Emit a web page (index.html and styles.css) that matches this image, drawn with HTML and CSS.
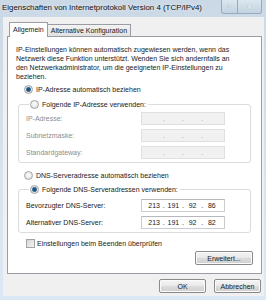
FILE: index.html
```html
<!DOCTYPE html>
<html lang="de">
<head>
  <meta charset="UTF-8" />
  <title>Eigenschaften von Internetprotokoll Version 4 (TCP/IPv4)</title>
  <link rel="stylesheet" href="styles.css">
</head>
<body>
  <div class="window">
    <!-- Titelleiste -->
    <div class="titlebar">
      <span class="title">Eigenschaften von Internetprotokoll Version 4 (TCP/IPv4)</span>
      <div class="caption">
        <span class="cap-btn help">?</span>
        <span class="cap-btn close">x</span>
      </div>
    </div>

    <div class="dialog">
      <div class="tabs">
        <div class="tab active">Allgemein</div>
        <div class="tab">Alternative Konfiguration</div>
      </div>

      <div class="panel">
        <p class="intro">IP-Einstellungen können automatisch zugewiesen werden, wenn das Netzwerk diese Funktion unterstützt. Wenden Sie sich andernfalls an den Netzwerkadministrator, um die geeigneten IP-Einstellungen zu beziehen.</p>

        <div class="option first"><span class="radio checked"></span>IP-Adresse automatisch beziehen</div>

        <fieldset class="group ip-group">
          <legend><span class="radio"></span>Folgende IP-Adresse verwenden:</legend>
          <div class="row disabled">
            <span class="label">IP-Adresse:</span>
            <div class="ipbox off"><span></span><i>.</i><span></span><i>.</i><span></span><i>.</i><span></span></div>
          </div>
          <div class="row disabled">
            <span class="label">Subnetzmaske:</span>
            <div class="ipbox off"><span></span><i>.</i><span></span><i>.</i><span></span><i>.</i><span></span></div>
          </div>
          <div class="row disabled">
            <span class="label">Standardgateway:</span>
            <div class="ipbox off"><span></span><i>.</i><span></span><i>.</i><span></span><i>.</i><span></span></div>
          </div>
        </fieldset>

        <div class="option dns-auto"><span class="radio"></span>DNS-Serveradresse automatisch beziehen</div>

        <fieldset class="group dns-group">
          <legend><span class="radio checked"></span>Folgende DNS-Serveradressen verwenden:</legend>
          <div class="row">
            <span class="label">Bevorzugter DNS-Server:</span>
            <div class="ipbox"><span>213</span><i>.</i><span>191</span><i>.</i><span>92</span><i>.</i><span>86</span></div>
          </div>
          <div class="row">
            <span class="label">Alternativer DNS-Server:</span>
            <div class="ipbox"><span>213</span><i>.</i><span>191</span><i>.</i><span>92</span><i>.</i><span>82</span></div>
          </div>
        </fieldset>

        <div class="option check-row"><span class="checkbox"></span>Einstellungen beim Beenden überprüfen</div>

        <div class="advanced">
          <button class="btn wide">Erweitert...</button>
        </div>
      </div>

      <div class="actions">
        <button class="btn">OK</button>
        <button class="btn">Abbrechen</button>
      </div>
    </div>
  </div>
</body>
</html>
```

FILE: styles.css
```css
body {
  margin: 0;
  font-family: "Liberation Sans", Arial, sans-serif;
  font-size: 7px;
  color: #1a1a1a;
}

.window {
  width: 266px;
  height: 300px;
  box-sizing: border-box;
  padding: 0 2px 4px 3px;
  display: flex;
  flex-direction: column;
  background: linear-gradient(#cbd9e6, #d6e4f0 60%, #dbe9f6);
  overflow: hidden;
}

/* Titelleiste */
.titlebar {
  height: 17px;
  display: flex;
  align-items: flex-start;
  justify-content: space-between;
  margin-left: -1px;
}

.title {
  font-size: 7.9px;
  line-height: 16px;
  color: #111;
  text-shadow: 0 0 3px #e8f0f7;
}

.caption {
  display: flex;
  margin-right: 2px;
}

.cap-btn {
  height: 13px;
  display: flex;
  align-items: center;
  justify-content: center;
  border: 1px solid #98aabb;
  border-top: none;
  background: linear-gradient(#dbe6ef, #c3d3e1);
  color: #f4f8fb;
  font-size: 8px;
  font-weight: bold;
  text-shadow: 0 0 1px #6d8092;
}

.cap-btn.help {
  width: 15px;
  border-radius: 0 0 0 3px;
}

.cap-btn.close {
  width: 23px;
  border-left: none;
  border-radius: 0 0 3px 0;
}

/* Dialogflaeche */
.dialog {
  flex: 1;
  background: #f0f0f0;
  padding: 6px 2px 3px 4px;
  display: flex;
  flex-direction: column;
}

.tabs {
  display: flex;
  align-items: flex-end;
  padding-left: 3px;
  height: 13px;
}

.tab {
  height: 11px;
  line-height: 11px;
  padding: 0 3px;
  border: 1px solid #9a9da4;
  border-bottom: none;
  background: linear-gradient(#f3f3f3, #e1e1e1);
  margin-left: -1px;
}

.tab.active {
  height: 14px;
  line-height: 14px;
  background: #fff;
  position: relative;
  z-index: 1;
  margin-bottom: -1px;
  padding: 0 3px;
}

.panel {
  height: 238px;
  box-sizing: border-box;
  border: 1px solid #9a9da4;
  background: #fff;
  padding: 8px 8px 0 8px;
}

.intro {
  margin: 0;
  max-width: 220px;
  line-height: 9px;
}

.option {
  height: 10px;
  display: flex;
  align-items: center;
  padding-left: 8px;
}

.option.first {
  margin-top: 3px;
}

.option.dns-auto {
  margin-top: 7px;
}

.option.check-row {
  margin-top: 5px;
  padding-left: 10px;
}

.radio {
  width: 7px;
  height: 7px;
  border-radius: 50%;
  border: 1px solid #a3a3a3;
  background: radial-gradient(circle at 50% 40%, #fdfdfd, #dadada);
  margin-right: 3px;
  flex: none;
}

.radio.checked {
  background: radial-gradient(circle, #1f5783 0 1.8px, #7d9ab3 2.4px, #e4e8ec 3px);
}

.checkbox {
  width: 7px;
  height: 7px;
  border: 1px solid #a3a3a3;
  background: linear-gradient(135deg, #d6d6d6, #f5f5f5);
  margin-right: 2px;
  flex: none;
}

.group {
  margin: 5px 2px 0 2px;
  padding: 3px 0 3px 7px;
  border: 1px solid #dcdcdc;
  border-radius: 3px;
}

.group legend {
  display: flex;
  align-items: center;
  height: 10px;
  padding: 0 2px 0 1px;
  margin-left: 3px;
}

.dns-group {
  margin-top: 4px;
  padding-top: 5px;
}

.row {
  height: 13px;
  display: flex;
  align-items: center;
}

.row + .row {
  margin-top: 4px;
}

.row.disabled .label {
  color: #8d8d8d;
}

.label {
  width: 115px;
  flex: none;
}

.ipbox {
  width: 84px;
  height: 13px;
  box-sizing: border-box;
  border: 1px solid #c9ccd1;
  border-top-color: #b5b8bd;
  background: #fff;
  display: flex;
  align-items: center;
  padding: 0 4px;
}

.ipbox.off {
  background: #f1f1f1;
  border-color: #dfdfdf;
  color: #9a9a9a;
}

.ipbox span {
  flex: 1;
  text-align: center;
}

.ipbox i {
  font-style: normal;
  width: 3px;
  text-align: center;
}

.advanced {
  display: flex;
  justify-content: flex-end;
  margin-top: 3px;
}

.btn {
  height: 14px;
  width: 47px;
  padding: 0;
  font-family: inherit;
  font-size: 7px;
  color: #1a1a1a;
  border: 1px solid #8a8a8a;
  border-radius: 2px;
  background: linear-gradient(#f4f4f4 0%, #ebebeb 45%, #dddddd 50%, #cfcfcf 100%);
  box-shadow: inset 0 0 0 1px #fbfbfb;
}

.btn.wide {
  width: 58px;
}

.actions {
  display: flex;
  justify-content: flex-end;
  gap: 8px;
  margin-top: 5px;
  padding-right: 1px;
}
```
